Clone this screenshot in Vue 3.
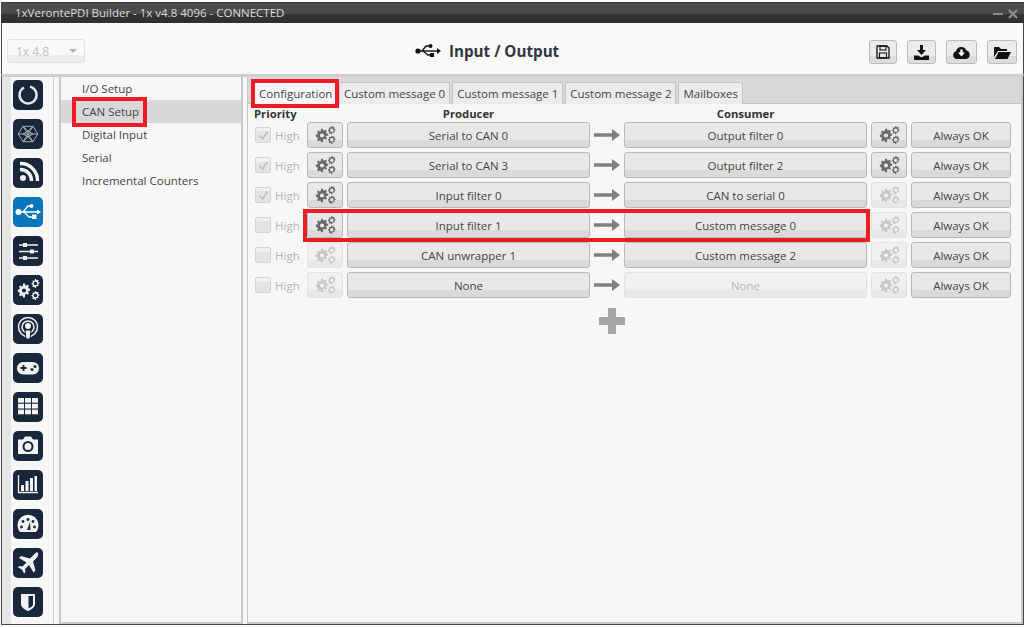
<script setup>
const tabs = ['Configuration', 'Custom message 0', 'Custom message 1', 'Custom message 2', 'Mailboxes']
const nav = ['I/O Setup', 'CAN Setup', 'Digital Input', 'Serial', 'Incremental Counters']
const rows = [
  { checked: true, gearA: true, producer: 'Serial to CAN 0', consumer: 'Output filter 0', gearB: true },
  { checked: true, gearA: true, producer: 'Serial to CAN 3', consumer: 'Output filter 2', gearB: true },
  { checked: true, gearA: true, producer: 'Input filter 0', consumer: 'CAN to serial 0', gearB: false },
  { checked: false, gearA: true, producer: 'Input filter 1', consumer: 'Custom message 0', gearB: false },
  { checked: false, gearA: false, producer: 'CAN unwrapper 1', consumer: 'Custom message 2', gearB: false },
  { checked: false, gearA: false, producer: 'None', consumer: 'None', gearB: false, consumerOff: true },
]
const gearPath = 'M7 0h2l.4 1.9 1.3.5 1.6-1 1.4 1.4-1 1.6.5 1.3 1.9.4v2l-1.9.4-.5 1.3 1 1.6-1.4 1.4-1.6-1-1.3.5L9 16H7l-.4-1.9-1.3-.5-1.6 1-1.4-1.4 1-1.6-.5-1.3L.9 9V7l1.9-.4.5-1.3-1-1.6 1.4-1.4 1.6 1 1.3-.5z'
</script>

<template>
  <div class="win">
    <header class="title">
      <span>1xVerontePDI Builder - 1x v4.8 4096 - CONNECTED</span>
      <span class="winbtns">
        <svg width="10" height="10" viewBox="0 0 10 10"><rect x="0" y="4" width="10" height="2" fill="#8b8b8b"/></svg>
        <svg width="10" height="10" viewBox="0 0 10 10"><path d="M1 1l8 8M9 1l-8 8" stroke="#8b8b8b" stroke-width="2.4"/></svg>
      </span>
    </header>

    <div class="toolbar">
      <div class="version"><span>1x 4.8</span><i class="caret"></i></div>
      <div class="heading">
        <svg width="26" height="16" viewBox="0 0 26 16">
          <path d="M2 8h21" stroke="#111" stroke-width="1.4" fill="none"/>
          <path d="M7 8l4-5h3M8 8l5 4h2" stroke="#111" stroke-width="1.4" fill="none"/>
          <circle cx="3" cy="8" r="2.6" fill="#111"/>
          <circle cx="15.5" cy="3" r="2" fill="#111"/>
          <rect x="15" y="10" width="4" height="4" fill="#111"/>
          <path d="M22 5l4 3-4 3z" fill="#111"/>
        </svg>
        <span>Input / Output</span>
      </div>
      <div class="actions">
        <button class="act w28">
          <svg width="14" height="14" viewBox="0 0 14 14"><path d="M1 1h10l2 2v10H1z" fill="none" stroke="#111" stroke-width="1.3"/><rect x="4" y="1" width="6" height="4" fill="none" stroke="#111" stroke-width="1.100"/><rect x="3.500" y="8" width="7" height="5" fill="none" stroke="#111" stroke-width="1.100"/></svg>
        </button>
        <button class="act w29">
          <svg width="15" height="15" viewBox="0 0 15 15"><path d="M6 0h3v5h3l-4.500 5L3 5h3z" fill="#111"/><path d="M0 10.500h4l3.500 2 3.500-2h4V15H0z" fill="#111"/></svg>
        </button>
        <button class="act w31">
          <svg width="17" height="13" viewBox="0 0 17 13"><path d="M4 13a4 4 0 0 1-1-7.800A5.500 5.500 0 0 1 13.500 4.600 4.300 4.300 0 0 1 13 13z" fill="#111"/><path d="M7.300 3.500h2.400v3H12l-3.500 4-3.500-4h2.300z" fill="#fff"/></svg>
        </button>
        <button class="act w30">
          <svg width="17" height="13" viewBox="0 0 17 13"><path d="M0 1h5l2 2h6v2H4L0 11z" fill="#111"/><path d="M4.500 6H17l-3.500 7H1z" fill="#111"/></svg>
        </button>
      </div>
    </div>

    <div class="body">
      <aside class="rail">
        <div class="ico"><svg viewBox="0 0 30 30"><path d="M17 6.700A8.500 8.500 0 1 1 11 7.500" fill="none" stroke="#e4e4e4" stroke-width="2.400"/></svg></div>
        <div class="ico"><svg viewBox="0 0 30 30"><g fill="none" stroke="#b5b8bc" stroke-width="1.300" transform="translate(4.500 4.500) scale(.7)"><path d="M8 4h14l7 11-7 11H8L1 15z"/><path d="M8 4l14 22M22 4L8 26M1 15h28M8 4l7 7 7-7M8 26l7-7 7 7M15 11l-7 4 7 4 7-4z"/></g></svg></div>
        <div class="ico"><svg viewBox="0 0 30 30"><circle cx="10" cy="20" r="3" fill="#f2f2f2"/><path d="M7 11.500a11 11 0 0 1 11.500 11.500M7 5.500a17 17 0 0 1 17.500 17.500" fill="none" stroke="#f2f2f2" stroke-width="3.400"/></svg></div>
        <div class="ico blue"><svg viewBox="0 0 30 30"><path d="M4 15h22M10 15l5-6h3M11 15l5 5h3" fill="none" stroke="#fff" stroke-width="1.300"/><circle cx="5.500" cy="15" r="3" fill="#fff"/><circle cx="18.500" cy="9" r="2" fill="#fff"/><rect x="19" y="17.500" width="4.500" height="4.500" fill="#fff"/><path d="M24 12.500l4 2.500-4 2.500z" fill="#fff"/></svg></div>
        <div class="ico"><svg viewBox="0 0 30 30"><g stroke="#f2f2f2" stroke-width="1.300"><path d="M6 9h19M6 15.500h19M6 22h19"/></g><g fill="#f2f2f2"><rect x="10" y="7" width="4" height="4"/><rect x="17" y="13.500" width="4" height="4"/><rect x="10" y="20" width="4" height="4"/></g></svg></div>
        <div class="ico"><svg viewBox="0 0 30 30"><svg x="4" y="8" width="14" height="15" viewBox="0 0 16 16" fill="#f2f2f2"><path :d="gearPath"/><circle cx="8" cy="8" r="2.400" fill="#18273a"/></svg><svg x="18" y="4" width="9" height="9" viewBox="0 0 16 16" fill="#f2f2f2"><path :d="gearPath"/><circle cx="8" cy="8" r="3.200" fill="#18273a"/></svg><svg x="18" y="16" width="9" height="9" viewBox="0 0 16 16" fill="#f2f2f2"><path :d="gearPath"/><circle cx="8" cy="8" r="3.200" fill="#18273a"/></svg></svg></div>
        <div class="ico"><svg viewBox="0 0 30 30"><g fill="none" stroke="#f2f2f2" stroke-width="1.500"><circle cx="15" cy="13" r="9.500"/><circle cx="15" cy="13" r="6"/></g><circle cx="15" cy="12" r="3" fill="#f2f2f2"/><path d="M12 16h6l-1 9h-4z" fill="#f2f2f2" stroke="#18273a"/></svg></div>
        <div class="ico"><svg viewBox="0 0 30 30"><rect x="4" y="9" width="22" height="12.500" rx="6.200" fill="#f2f2f2"/><path d="M7.500 15h6M10.500 12v6" stroke="#18273a" stroke-width="1.800"/><circle cx="19" cy="16.500" r="1.500" fill="#18273a"/><circle cx="22" cy="13.500" r="1.500" fill="#18273a"/></svg></div>
        <div class="ico"><svg viewBox="0 0 30 30"><g fill="#f2f2f2"><rect x="5" y="6" width="6" height="4.700"/><rect x="12" y="6" width="6" height="4.700"/><rect x="19" y="6" width="6" height="4.700"/><rect x="5" y="11.800" width="6" height="4.700"/><rect x="12" y="11.800" width="6" height="4.700"/><rect x="19" y="11.800" width="6" height="4.700"/><rect x="5" y="17.600" width="6" height="4.700"/><rect x="12" y="17.600" width="6" height="4.700"/><rect x="19" y="17.600" width="6" height="4.700"/></g></svg></div>
        <div class="ico"><svg viewBox="0 0 30 30"><path d="M5 8.500h5l2-3h6l2 3h5V23H5z" fill="#f2f2f2"/><circle cx="15" cy="15.500" r="4.500" fill="none" stroke="#18273a" stroke-width="2"/></svg></div>
        <div class="ico"><svg viewBox="0 0 30 30"><path d="M5.500 5v17.500H25" fill="none" stroke="#f2f2f2" stroke-width="1.300"/><g fill="#f2f2f2"><rect x="8" y="15" width="3" height="6"/><rect x="12.500" y="11" width="3" height="10"/><rect x="17" y="8" width="3" height="13"/><rect x="21.500" y="6" width="2.500" height="15"/></g></svg></div>
        <div class="ico"><svg viewBox="0 0 30 30"><path d="M7 23a10.500 10.500 0 1 1 16 0z" fill="#f2f2f2"/><g fill="#18273a"><circle cx="8.500" cy="18" r="1.400"/><circle cx="10" cy="12.500" r="1.400"/><circle cx="15" cy="10.500" r="1.400"/><circle cx="20" cy="12.500" r="1.400"/><circle cx="21.500" cy="18" r="1.400"/></g><path d="M14 21l3-8 .5 8z" fill="#18273a"/></svg></div>
        <div class="ico"><svg viewBox="0 0 30 30"><path d="M24.500 4.500c1.500 1.500.5 4-1 5.500l-3.500 3.500 2.500 9-2 2-4.500-7.500-4 4 .5 3-1.500 1.500-2-4-4-2 1.500-1.500 3 .5 4-4L6 10l2-2 9 2.500L20.500 7c1.500-1.500 3-3.500 4-2.500z" fill="#f2f2f2"/></svg></div>
        <div class="ico"><svg viewBox="0 0 30 30"><path d="M8 7h14v10c0 3.500-3.500 5.500-7 7-3.500-1.500-7-3.500-7-7z" fill="#f2f2f2"/><path d="M15.500 9H20v8c0 2-2 3.300-4.500 4.400z" fill="#18273a"/></svg></div>
      </aside>

      <nav class="list">
        <div v-for="n in nav" :key="n" class="item" :class="{ sel: n === 'CAN Setup' }">{{ n }}</div>
      </nav>

      <main class="panel">
        <div class="tabs">
          <div v-for="(t, i) in tabs" :key="t" class="tab" :class="{ on: i === 0 }">{{ t }}</div>
        </div>
        <div class="content">
          <div class="row head">
            <b class="c-pri">Priority</b>
            <span class="c-gear"></span>
            <b class="c-main">Producer</b>
            <span class="c-arrow"></span>
            <b class="c-main">Consumer</b>
          </div>
          <div v-for="r in rows" :key="r.producer" class="row">
            <div class="c-pri chk">
              <span class="box">
                <svg v-if="r.checked" width="13" height="13" viewBox="0 0 13 13"><path d="M2.500 6.500l3 3.500 5-7.500" fill="none" stroke="#bdbdbd" stroke-width="1.500"/></svg>
              </span>
              <span>High</span>
            </div>
            <button class="btn c-gear" :class="{ off: !r.gearA }">
              <svg class="gears" width="21" height="18" viewBox="0 0 21 18">
                <svg x="0" y="2.500" width="14" height="14" viewBox="0 0 16 16"><path :d="gearPath"/><circle cx="8" cy="8" r="2.400" fill="#e6e6e6"/></svg>
                <svg x="12.500" y="0" width="8.500" height="8.500" viewBox="0 0 16 16"><path :d="gearPath"/><circle cx="8" cy="8" r="3.200" fill="#e6e6e6"/></svg>
                <svg x="12.500" y="9.500" width="8.500" height="8.500" viewBox="0 0 16 16"><path :d="gearPath"/><circle cx="8" cy="8" r="3.200" fill="#e6e6e6"/></svg>
              </svg>
            </button>
            <button class="btn c-main">{{ r.producer }}</button>
            <svg class="c-arrow arrow" width="26" height="12" viewBox="0 0 26 12"><path d="M0 4.200h18V0l8 6-8 6V7.800H0z" fill="#7f7f7f"/></svg>
            <button class="btn c-main" :class="{ off: r.consumerOff }">{{ r.consumer }}</button>
            <button class="btn c-gear" :class="{ off: !r.gearB }">
              <svg class="gears" width="21" height="18" viewBox="0 0 21 18">
                <svg x="0" y="2.500" width="14" height="14" viewBox="0 0 16 16"><path :d="gearPath"/><circle cx="8" cy="8" r="2.400" fill="#e6e6e6"/></svg>
                <svg x="12.500" y="0" width="8.500" height="8.500" viewBox="0 0 16 16"><path :d="gearPath"/><circle cx="8" cy="8" r="3.200" fill="#e6e6e6"/></svg>
                <svg x="12.500" y="9.500" width="8.500" height="8.500" viewBox="0 0 16 16"><path :d="gearPath"/><circle cx="8" cy="8" r="3.200" fill="#e6e6e6"/></svg>
              </svg>
            </button>
            <button class="btn c-ok">Always OK</button>
          </div>
          <div class="plus">
            <svg width="26" height="26" viewBox="0 0 26 26"><path d="M9 0h8v9h9v8h-9v9H9v-9H0V9h9z" fill="#a6a6a6"/></svg>
          </div>
        </div>
      </main>
    </div>

    <i class="mark m1"></i>
    <i class="mark m2"></i>
    <i class="mark m3"></i>
  </div>
</template>

<style>
html, body { margin: 0; background: #fff; }
</style>

<style scoped>
.win {
  position: relative;
  width: 1026px;
  height: 628px;
  box-sizing: border-box;
  padding: 2px 2px 3px 1px;
  background: #fff;
  font-family: "Open Sans", "Liberation Sans", sans-serif;
  font-size: 11.5px;
  color: #444;
  overflow: hidden;
  display: flex;
  flex-direction: column;
}
.title {
  height: 21px;
  flex: none;
  box-sizing: border-box;
  padding: 2px 6px 0 14px;
  background: linear-gradient(#4e4e4e 0, #4a4a4a 55%, #353535 55%, #2f2f2f 100%);
  border-top: 1px solid #3c3c3c;
  color: #dcdcdc;
  line-height: 16px;
  display: flex;
  justify-content: space-between;
}
.winbtns { display: flex; gap: 5px; align-items: center; }
.toolbar {
  height: 51px;
  flex: none;
  box-sizing: border-box;
  padding-top: 17px;
  display: flex;
  align-items: flex-start;
  background: #f9f9f9;
  border-left: 1px solid #444;
  border-right: 1px solid #444;
}
.version {
  box-sizing: border-box;
  width: 78px;
  height: 24px;
  margin: -1px 0 0 5px;
  border: 1px solid #e2e2e2;
  border-radius: 3px;
  background: linear-gradient(#f9f9f9 70%, #eee 70%);
  color: #c0c0c0;
  font-size: 12px;
  display: flex;
  align-items: center;
  justify-content: space-between;
  padding: 0 7px 0 8px;
}
.caret { border: 4px solid transparent; border-top: 4px solid #b5b5b5; border-bottom: 0; }
.heading {
  margin: 1px 0 0 330px;
  display: flex;
  align-items: center;
  gap: 8px;
  font-size: 15.200px;
  font-weight: 700;
  color: #2f3640;
  line-height: 20px;
}
.actions { display: flex; gap: 10px; margin: 0 6px 0 auto; }
.act {
  box-sizing: border-box;
  height: 24px;
  padding: 0;
  border: 1px solid #bdbdbd;
  border-radius: 3px;
  background: linear-gradient(#ebebeb 70%, #dcdcdc 70%);
  display: flex;
  align-items: center;
  justify-content: center;
}
.w28 { width: 28px; }
.w29 { width: 29px; }
.w30 { width: 30px; }
.w31 { width: 31px; }
.body {
  flex: 1;
  display: flex;
  min-height: 0;
  border-top: 3px solid #cfcfcf;
  border-left: 1px solid #444;
  border-right: 1px solid #444;
  border-bottom: 1px solid #444;
  background: #f7f7f7;
}
.rail {
  width: 52px;
  flex: none;
  box-sizing: border-box;
  padding: 3px 0 0 11px;
  display: flex;
  flex-direction: column;
  gap: 9px;
  background: linear-gradient(90deg, #e6e6e6 9px, #f7f7f7 9px);
  border-right: 1px solid #d2d2d2;
  margin-right: 5px;
}
.ico {
  width: 30px;
  height: 30px;
  flex: none;
  border-radius: 5px;
  background: #18273a;
  overflow: hidden;
}
.ico > svg { display: block; width: 30px; height: 30px; }
.ico.blue { background: #0675bb; }
.list {
  width: 184px;
  flex: none;
  box-sizing: border-box;
  background: #f7f7f7;
  border: 2px solid #c8c8c8;
  border-top: 0;
  margin-right: 4px;
}
.item { height: 23px; line-height: 23px; padding-left: 21px; color: #444; }
.item.sel { background: #d8d8d8; }
.panel {
  flex: 1;
  display: flex;
  flex-direction: column;
  min-width: 0;
  border: 1px solid #c8c8c8;
  border-width: 0 2px 2px 1px;
  background: #f7f7f7;
}
.tabs {
  height: 27px;
  flex: none;
  box-sizing: border-box;
  padding: 5px 0 0 4px;
  display: flex;
  gap: 2px;
  background: #d9d9d9;
  border-bottom: 1px solid #c4c4c4;
}
.tab {
  box-sizing: border-box;
  padding: 0 4px;
  height: 22px;
  line-height: 22px;
  background: #ececec;
  border: 1px solid #c4c4c4;
  border-bottom: 0;
  border-radius: 2px 2px 0 0;
  color: #444;
  white-space: nowrap;
}
.tab.on { background: #f7f7f7; width: 85px; padding-left: 6px; }
.content { padding: 3px 0 0 6px; }
.row { display: flex; align-items: center; height: 30px; }
.head { height: 13px; color: #333; font-size: 11.300px; }
.head b { text-align: center; font-weight: 700; }
.head .c-pri { text-align: left; }
.c-pri { width: 53px; flex: none; }
.c-gear { width: 36px; flex: none; margin-right: 4px; }
.c-main { width: 243px; flex: none; }
.c-arrow { width: 34px; flex: none; }
.c-ok { width: 100px; flex: none; }
.row > .btn.c-main + .btn.c-gear { margin-left: 4px; }
.chk { display: flex; align-items: center; gap: 4px; color: #b4b4b4; }
.box {
  width: 16px;
  height: 16px;
  box-sizing: border-box;
  border: 1px solid #d4d4d4;
  border-radius: 2px;
  background: linear-gradient(#f1f1f1 25%, #e4e4e4 25%);
  display: flex;
  align-items: center;
  justify-content: center;
  margin-left: 1px;
}
.btn {
  height: 26px;
  padding: 0;
  box-sizing: border-box;
  border: 1px solid #b8b8b8;
  border-radius: 3px;
  background: linear-gradient(#e8e8e8 70%, #dadada 70%);
  color: #444;
  font: inherit;
  display: flex;
  align-items: center;
  justify-content: center;
}
.btn.off { border-color: #e2e2e2; background: linear-gradient(#f0f0f0 70%, #e8e8e8 70%); color: #b5b5b5; }
.gears { fill: #6a6a6a; }
.btn.off .gears { fill: #c8c8c8; }
.btn.off .gears circle { fill: #f0f0f0; }
.arrow { width: 26px; margin: 0 4px; }
.plus { display: flex; justify-content: center; padding-top: 8px; width: 716px; }
.mark { position: absolute; box-sizing: border-box; border: 4px solid #ed1c24; display: block; }
.m1 { left: 72px; top: 97px; width: 75px; height: 30px; }
.m2 { left: 251px; top: 79px; width: 88px; height: 29px; }
.m3 { left: 303px; top: 209px; width: 567px; height: 33px; }
</style>
